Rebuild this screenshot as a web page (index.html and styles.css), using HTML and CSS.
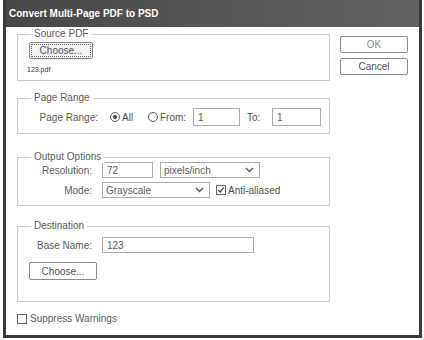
FILE: index.html
```html
<!DOCTYPE html>
<html lang="en">
  <head>
    <meta charset="UTF-8" />
    <title>Convert Multi-Page PDF to PSD</title>
    <link rel="stylesheet" href="styles.css">
  </head>

  <body>
    <div class="dialog">
      <div class="titlebar">Convert Multi-Page PDF to PSD</div>

      <div class="content">
        <div class="main">
          <div class="group group-source">
            <span class="group-title">Source PDF</span>
            <button class="btn btn-default btn-choose">Choose...</button>
            <div class="file-name">123.pdf</div>
          </div>

          <div class="group group-range">
            <span class="group-title">Page Range</span>
            <div class="row">
              <span class="label label-range">Page Range:</span>
              <span class="option option-all"><span class="radio checked"></span>All</span>
              <span class="option option-from"><span class="radio"></span>From:</span>
              <span class="field field-tall field-from">1</span>
              <span class="to-label">To:</span>
              <span class="field field-tall field-to">1</span>
            </div>
          </div>

          <div class="group group-output">
            <span class="group-title">Output Options</span>
            <div class="row">
              <span class="label">Resolution:</span>
              <span class="field field-res">72</span>
              <span class="field select select-unit">pixels/inch
                <svg class="chevron" width="9" height="6" viewBox="0 0 9 6"><path d="M1 1 L4.5 4.5 L8 1" fill="none" stroke="#555" stroke-width="1.4"/></svg>
              </span>
            </div>
            <div class="row row-mode">
              <span class="label">Mode:</span>
              <span class="field select select-mode">Grayscale
                <svg class="chevron" width="9" height="6" viewBox="0 0 9 6"><path d="M1 1 L4.5 4.5 L8 1" fill="none" stroke="#555" stroke-width="1.4"/></svg>
              </span>
              <span class="check-item">
                <span class="checkbox">
                  <svg width="8" height="8" viewBox="0 0 8 8"><path d="M1.2 4 L3.2 6 L6.8 1.6" fill="none" stroke="#444" stroke-width="1.2"/></svg>
                </span>Anti-aliased
              </span>
            </div>
          </div>

          <div class="group group-dest">
            <span class="group-title">Destination</span>
            <div class="row">
              <span class="label">Base Name:</span>
              <span class="field field-name">123</span>
            </div>
            <button class="btn btn-choose btn-dest">Choose...</button>
          </div>

          <div class="suppress">
            <span class="checkbox"></span>Suppress Warnings
          </div>
        </div>

        <div class="side">
          <button class="btn btn-side btn-ok">OK</button>
          <button class="btn btn-side">Cancel</button>
        </div>
      </div>
    </div>
  </body>
</html>
```

FILE: styles.css
```css
html, body {
  margin: 0;
  padding: 0;
  background: #fff;
  font-family: 'Liberation Sans', Arial, sans-serif;
  font-size: 10px;
  color: #505050;
}

.dialog {
  margin-left: 3px;
  width: 419px;
  height: 338px;
  box-sizing: border-box;
  border: 3px solid #3a3a3a;
  border-top: none;
  display: flex;
  flex-direction: column;
}

.titlebar {
  height: 27px;
  flex: none;
  display: flex;
  align-items: center;
  padding-left: 3px;
  background: linear-gradient(to right, #474747, #585858 60%, #616161);
  color: #fff;
  font-weight: bold;
  font-size: 10px;
}

.content {
  display: flex;
  padding: 7px 0 0 11px;
}

.main {
  width: 313px;
  display: flex;
  flex-direction: column;
}

.group {
  position: relative;
  box-sizing: border-box;
  border: 1px solid #cbcbcb;
}

.group-title {
  position: absolute;
  top: -7px;
  left: 13px;
  padding: 0 3px;
  background: #fff;
  line-height: 12px;
  color: #5a5a5a;
}

.group-source {
  height: 47px;
  padding: 7px 0 0 11px;
}

.group-range {
  height: 36px;
  margin-top: 17px;
  padding: 9px 0 0 0;
}

.group-output {
  height: 49px;
  margin-top: 23px;
  padding: 4px 0 0 0;
}

.group-dest {
  height: 76px;
  margin-top: 20px;
  padding: 10px 0 0 0;
}

.row {
  display: flex;
  align-items: center;
}

.row-mode {
  margin-top: 4px;
}

.label {
  width: 74px;
  margin-right: 10px;
  text-align: right;
  color: #5a5a5a;
}

.label-range {
  width: 80px;
  margin-right: 12px;
}

.option {
  display: flex;
  align-items: center;
}

.option-all {
  width: 36px;
}

.option-from {
  width: 45px;
  margin-left: 2px;
}

.radio {
  width: 10px;
  height: 10px;
  box-sizing: border-box;
  border: 1px solid #555;
  border-radius: 50%;
  margin-right: 2px;
  display: flex;
  align-items: center;
  justify-content: center;
}

.radio.checked::after {
  content: '';
  width: 4px;
  height: 4px;
  border-radius: 50%;
  background: #444;
}

.field {
  box-sizing: border-box;
  height: 16px;
  border: 1px solid #ababab;
  padding-left: 4px;
  display: flex;
  align-items: center;
  background: #fff;
  color: #5a5a5a;
}

.field-tall {
  height: 18px;
}

.field-from {
  width: 47px;
}

.to-label {
  width: 25px;
  margin-left: 7px;
}

.field-to {
  width: 49px;
}

.field-res {
  width: 51px;
}

.select {
  justify-content: space-between;
  padding-left: 3px;
  padding-right: 5px;
}

.select-unit {
  width: 100px;
  margin-left: 7px;
}

.select-mode {
  width: 108px;
}

.chevron {
  display: block;
}

.check-item {
  display: flex;
  align-items: center;
  margin-left: 6px;
}

.checkbox {
  width: 10px;
  height: 10px;
  box-sizing: border-box;
  border: 1px solid #666;
  margin-right: 2px;
  display: flex;
  align-items: center;
  justify-content: center;
  background: #fff;
}

.field-name {
  width: 152px;
}

.btn {
  box-sizing: border-box;
  font-family: 'Liberation Sans', Arial, sans-serif;
  font-size: 10px;
  color: #505050;
  background: #fff;
  border: 1px solid #8a8a8a;
  border-radius: 2px;
  padding: 0;
}

.btn-choose {
  width: 64px;
  height: 17px;
  display: block;
}

.btn-default {
  background: #f4f4f4;
  outline: 1px dotted #666;
  outline-offset: -3px;
}

.btn-dest {
  width: 68px;
  height: 18px;
  margin: 9px 0 0 11px;
}

.file-name {
  margin: 7px 0 0 -2px;
  font-size: 7px;
  color: #333;
}

.suppress {
  display: flex;
  align-items: center;
  margin-top: 11px;
  color: #5a5a5a;
}

.suppress .checkbox {
  margin-right: 3px;
}

.side {
  margin: 2px 0 0 10px;
  display: flex;
  flex-direction: column;
  gap: 5px;
}

.btn-side {
  width: 68px;
  height: 17px;
}

.btn-ok {
  color: #8a8a8a;
}
```
